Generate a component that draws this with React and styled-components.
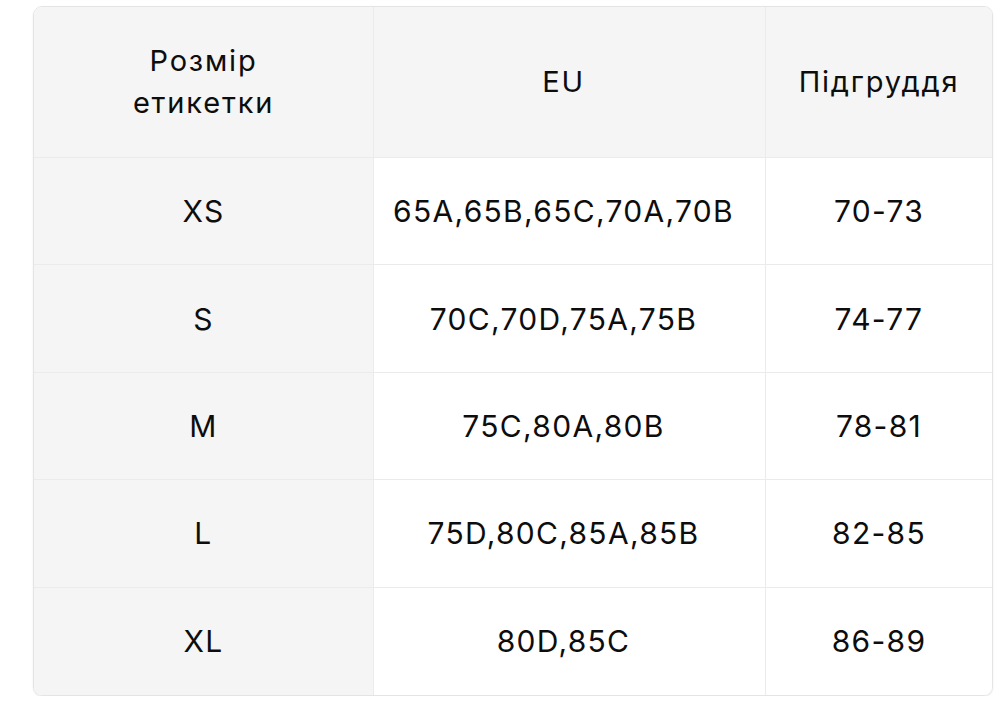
import React from "react";
import styled, { createGlobalStyle } from "styled-components";

const Global = createGlobalStyle`
  html, body { margin: 0; padding: 0; background: #ffffff; }
  body { font-family: Inter, "Liberation Sans", Arial, sans-serif; color: #111; }
`;

const Page = styled.div`
  padding: 6px 0 0 33px;
`;

const Table = styled.div`
  width: 960px;
  height: 690px;
  box-sizing: border-box;
  display: grid;
  grid-template-columns: 340px 392px 1fr;
  grid-template-rows: 151px repeat(5, 1fr);
  border: 1px solid #e4e4e4;
  border-radius: 9px;
  overflow: hidden;
  box-shadow: 0 1px 2px rgba(0, 0, 0, 0.08);
`;

const Cell = styled.div`
  display: flex;
  align-items: center;
  justify-content: center;
  text-align: center;
  box-sizing: border-box;
  padding-right: ${(p) => (p.$mid ? "12px" : "0")};
  background: ${(p) => (p.$shaded ? "#f5f5f5" : "#ffffff")};
  border-right: ${(p) => (p.$lastCol ? "none" : "1px solid #ebebeb")};
  border-bottom: ${(p) => (p.$lastRow ? "none" : "1px solid #ebebeb")};
  font-size: ${(p) => (p.$head ? "29px" : "30px")};
  line-height: ${(p) => (p.$head ? "42px" : "36px")};
  letter-spacing: ${(p) => (p.$head ? "1.8px" : "1.3px")};
  font-weight: 400;
  color: #0d0d0d;
`;

const headers = ["Розмір\nетикетки", "EU", "Підгруддя"];
const rows = [
  ["XS", "65A,65B,65C,70A,70B", "70-73"],
  ["S", "70C,70D,75A,75B", "74-77"],
  ["M", "75C,80A,80B", "78-81"],
  ["L", "75D,80C,85A,85B", "82-85"],
  ["XL", "80D,85C", "86-89"],
];

export default function App() {
  return (
    <>
      <Global />
      <Page>
        <Table>
          {headers.map((h, i) => (
            <Cell key={"h" + i} $head $shaded $mid={i === 1} $lastCol={i === 2}>
              <span>
                {h.split("\n").map((l, j) => (
                  <React.Fragment key={j}>
                    {j > 0 && <br />}
                    {l}
                  </React.Fragment>
                ))}
              </span>
            </Cell>
          ))}
          {rows.map((r, ri) =>
            r.map((c, ci) => (
              <Cell
                key={ri + "-" + ci}
                $shaded={ci === 0}
                $mid={ci === 1}
                $lastCol={ci === 2}
                $lastRow={ri === rows.length - 1}
              >
                {c}
              </Cell>
            ))
          )}
        </Table>
      </Page>
    </>
  );
}
